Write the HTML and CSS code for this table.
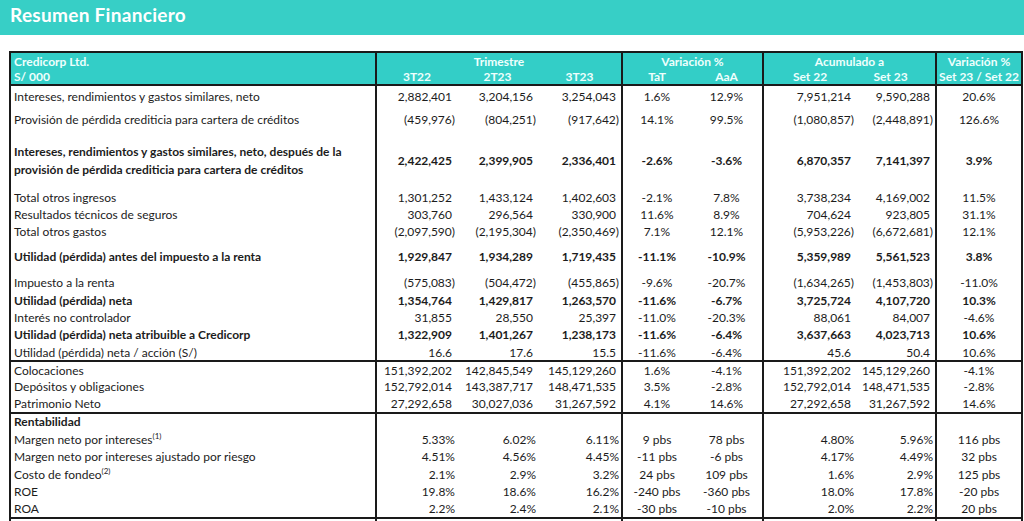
FILE: index.html
```html
<!DOCTYPE html>
<html lang="es">
<head>
    <meta charset="UTF-8">
    <meta name="viewport" content="width=device-width, initial-scale=1.0">
    <title>Resumen Financiero</title>
    <link rel="stylesheet" href="styles.css">
</head>
<body>
    <div class="banner">Resumen Financiero</div>

    <table class="summary">
        <colgroup>
            <col class="c-label">
            <col class="c-q1"><col class="c-q2"><col class="c-q3">
            <col class="c-tat"><col class="c-aaa">
            <col class="c-s22"><col class="c-s23">
            <col class="c-var">
        </colgroup>
        <thead>
            <tr class="h1">
                <th class="lbl">Credicorp Ltd.</th>
                <th colspan="3" class="grp">Trimestre</th>
                <th colspan="2" class="grp">Variación %</th>
                <th colspan="2" class="grp">Acumulado a</th>
                <th class="grp">Variación %</th>
            </tr>
            <tr class="h2">
                <th class="lbl">S/ 000</th>
                <th class="grp">3T22</th>
                <th>2T23</th>
                <th>3T23</th>
                <th class="grp">TaT</th>
                <th>AaA</th>
                <th class="grp">Set 22</th>
                <th class="s23">Set 23</th>
                <th class="grp">Set 23 / Set 22</th>
            </tr>
        </thead>

        <tbody>
            <tr class="r20">
                <td class="lbl">Intereses, rendimientos y gastos similares, neto</td>
                <td class="n grp">2,882,401</td><td class="n">3,204,156</td><td class="n">3,254,043</td>
                <td class="p grp">1.6%</td><td class="p">12.9%</td>
                <td class="n grp">7,951,214</td><td class="n">9,590,288</td>
                <td class="p grp">20.6%</td>
            </tr>
            <tr class="r26">
                <td class="lbl">Provisión de pérdida crediticia para cartera de créditos</td>
                <td class="n neg grp">(459,976)</td><td class="n neg">(804,251)</td><td class="n neg">(917,642)</td>
                <td class="p grp">14.1%</td><td class="p">99.5%</td>
                <td class="n neg grp">(1,080,857)</td><td class="n neg">(2,448,891)</td>
                <td class="p grp">126.6%</td>
            </tr>
            <tr class="r57 b">
                <td class="lbl two">Intereses, rendimientos y gastos similares, neto, después de la<br>provisión de pérdida crediticia para cartera de créditos</td>
                <td class="n grp">2,422,425</td><td class="n">2,399,905</td><td class="n">2,336,401</td>
                <td class="p grp">-2.6%</td><td class="p">-3.6%</td>
                <td class="n grp">6,870,357</td><td class="n">7,141,397</td>
                <td class="p grp">3.9%</td>
            </tr>
            <tr class="r17">
                <td class="lbl">Total otros ingresos</td>
                <td class="n grp">1,301,252</td><td class="n">1,433,124</td><td class="n">1,402,603</td>
                <td class="p grp">-2.1%</td><td class="p">7.8%</td>
                <td class="n grp">3,738,234</td><td class="n">4,169,002</td>
                <td class="p grp">11.5%</td>
            </tr>
            <tr class="r17">
                <td class="lbl">Resultados técnicos de seguros</td>
                <td class="n grp">303,760</td><td class="n">296,564</td><td class="n">330,900</td>
                <td class="p grp">11.6%</td><td class="p">8.9%</td>
                <td class="n grp">704,624</td><td class="n">923,805</td>
                <td class="p grp">31.1%</td>
            </tr>
            <tr class="r17">
                <td class="lbl">Total otros gastos</td>
                <td class="n neg grp">(2,097,590)</td><td class="n neg">(2,195,304)</td><td class="n neg">(2,350,469)</td>
                <td class="p grp">7.1%</td><td class="p">12.1%</td>
                <td class="n neg grp">(5,953,226)</td><td class="n neg">(6,672,681)</td>
                <td class="p grp">12.1%</td>
            </tr>
            <tr class="r32 b">
                <td class="lbl">Utilidad (pérdida) antes del impuesto a la renta</td>
                <td class="n grp">1,929,847</td><td class="n">1,934,289</td><td class="n">1,719,435</td>
                <td class="p grp">-11.1%</td><td class="p">-10.9%</td>
                <td class="n grp">5,359,989</td><td class="n">5,561,523</td>
                <td class="p grp">3.8%</td>
            </tr>
            <tr class="r20">
                <td class="lbl">Impuesto a la renta</td>
                <td class="n neg grp">(575,083)</td><td class="n neg">(504,472)</td><td class="n neg">(455,865)</td>
                <td class="p grp">-9.6%</td><td class="p">-20.7%</td>
                <td class="n neg grp">(1,634,265)</td><td class="n neg">(1,453,803)</td>
                <td class="p grp">-11.0%</td>
            </tr>
            <tr class="r17 b">
                <td class="lbl">Utilidad (pérdida) neta</td>
                <td class="n grp">1,354,764</td><td class="n">1,429,817</td><td class="n">1,263,570</td>
                <td class="p grp">-11.6%</td><td class="p">-6.7%</td>
                <td class="n grp">3,725,724</td><td class="n">4,107,720</td>
                <td class="p grp">10.3%</td>
            </tr>
            <tr class="r17">
                <td class="lbl">Interés no controlador</td>
                <td class="n grp">31,855</td><td class="n">28,550</td><td class="n">25,397</td>
                <td class="p grp">-11.0%</td><td class="p">-20.3%</td>
                <td class="n grp">88,061</td><td class="n">84,007</td>
                <td class="p grp">-4.6%</td>
            </tr>
            <tr class="r17 b">
                <td class="lbl">Utilidad (pérdida) neta atribuible a Credicorp</td>
                <td class="n grp">1,322,909</td><td class="n">1,401,267</td><td class="n">1,238,173</td>
                <td class="p grp">-11.6%</td><td class="p">-6.4%</td>
                <td class="n grp">3,637,663</td><td class="n">4,023,713</td>
                <td class="p grp">10.6%</td>
            </tr>
            <tr class="r14">
                <td class="lbl">Utilidad (pérdida) neta / acción (S/)</td>
                <td class="n grp">16.6</td><td class="n">17.6</td><td class="n">15.5</td>
                <td class="p grp">-11.6%</td><td class="p">-6.4%</td>
                <td class="n grp">45.6</td><td class="n">50.4</td>
                <td class="p grp">10.6%</td>
            </tr>
        </tbody>

        <tbody class="sec">
            <tr class="r16">
                <td class="lbl">Colocaciones</td>
                <td class="n grp">151,392,202</td><td class="n">142,845,549</td><td class="n">145,129,260</td>
                <td class="p grp">1.6%</td><td class="p">-4.1%</td>
                <td class="n grp">151,392,202</td><td class="n">145,129,260</td>
                <td class="p grp">-4.1%</td>
            </tr>
            <tr class="r17">
                <td class="lbl">Depósitos y obligaciones</td>
                <td class="n grp">152,792,014</td><td class="n">143,387,717</td><td class="n">148,471,535</td>
                <td class="p grp">3.5%</td><td class="p">-2.8%</td>
                <td class="n grp">152,792,014</td><td class="n">148,471,535</td>
                <td class="p grp">-2.8%</td>
            </tr>
            <tr class="r17">
                <td class="lbl">Patrimonio Neto</td>
                <td class="n grp">27,292,658</td><td class="n">30,027,036</td><td class="n">31,267,592</td>
                <td class="p grp">4.1%</td><td class="p">14.6%</td>
                <td class="n grp">27,292,658</td><td class="n">31,267,592</td>
                <td class="p grp">14.6%</td>
            </tr>
        </tbody>

        <tbody class="sec ratios">
            <tr class="r16t b">
                <td class="lbl">Rentabilidad</td>
                <td class="grp"></td><td></td><td></td>
                <td class="grp"></td><td></td>
                <td class="grp"></td><td></td>
                <td class="grp"></td>
            </tr>
            <tr class="r17">
                <td class="lbl">Margen neto por intereses<sup>(1)</sup></td>
                <td class="n grp">5.33%</td><td class="n">6.02%</td><td class="n">6.11%</td>
                <td class="p grp">9 pbs</td><td class="p">78 pbs</td>
                <td class="n grp">4.80%</td><td class="n">5.96%</td>
                <td class="p grp">116 pbs</td>
            </tr>
            <tr class="r17">
                <td class="lbl">Margen neto por intereses ajustado por riesgo</td>
                <td class="n grp">4.51%</td><td class="n">4.56%</td><td class="n">4.45%</td>
                <td class="p grp">-11 pbs</td><td class="p">-6 pbs</td>
                <td class="n grp">4.17%</td><td class="n">4.49%</td>
                <td class="p grp">32 pbs</td>
            </tr>
            <tr class="r18">
                <td class="lbl">Costo de fondeo<sup>(2)</sup></td>
                <td class="n grp">2.1%</td><td class="n">2.9%</td><td class="n">3.2%</td>
                <td class="p grp">24 pbs</td><td class="p">109 pbs</td>
                <td class="n grp">1.6%</td><td class="n">2.9%</td>
                <td class="p grp">125 pbs</td>
            </tr>
            <tr class="r17">
                <td class="lbl">ROE</td>
                <td class="n grp">19.8%</td><td class="n">18.6%</td><td class="n">16.2%</td>
                <td class="p grp">-240 pbs</td><td class="p">-360 pbs</td>
                <td class="n grp">18.0%</td><td class="n">17.8%</td>
                <td class="p grp">-20 pbs</td>
            </tr>
            <tr class="r17">
                <td class="lbl">ROA</td>
                <td class="n grp">2.2%</td><td class="n">2.4%</td><td class="n">2.1%</td>
                <td class="p grp">-30 pbs</td><td class="p">-10 pbs</td>
                <td class="n grp">2.0%</td><td class="n">2.2%</td>
                <td class="p grp">20 pbs</td>
            </tr>
        </tbody>

        <tbody class="sec">
            <tr class="r18 b">
                <td class="lbl">Calidad de cartera</td>
                <td class="grp"></td><td></td><td></td>
                <td class="grp"></td><td></td>
                <td class="grp"></td><td></td>
                <td class="grp"></td>
            </tr>
        </tbody>
    </table>
</body>
</html>
```

FILE: styles.css
```css
body {
    margin: 0;
    background-color: #fff;
    color: #1c1c1c;
    font-family: Lato, "Open Sans", sans-serif;
    overflow: hidden;
}

.banner {
    height: 35px;
    line-height: 29px;
    padding-left: 10px;
    background-color: #37cfc6;
    color: #fff;
    font-size: 19px;
    font-weight: 700;
    letter-spacing: 0.3px;
    margin-bottom: 16px;
}

.summary {
    margin-left: 9px;
    width: 1012px;
    table-layout: fixed;
    border-collapse: collapse;
    border: 2px solid #1a1a1a;
    font-size: 12px;
}

.c-label { width: 366px; }
.c-q1 { width: 81px; }
.c-q2 { width: 81px; }
.c-q3 { width: 84px; }
.c-tat { width: 69px; }
.c-aaa { width: 72px; }
.c-s22 { width: 93px; }
.c-s23 { width: 80px; }
.c-var { width: 86px; }

.summary th,
.summary td {
    padding: 0;
    white-space: nowrap;
    vertical-align: middle;
    line-height: 15px;
}

.summary .grp {
    border-left: 2px solid #1a1a1a;
}

/* encabezado */
.summary thead {
    background-color: #33cec7;
    color: #effffd;
    border-bottom: 2px solid #1a1a1a;
}

.summary thead th {
    font-weight: 700;
    text-align: center;
}

.summary .h1 th { height: 16px; }
.summary .h2 th { height: 15px; }
.summary thead .lbl { text-align: left; }
.summary .s23 { padding-right: 10px; }

/* celdas */
.summary .lbl {
    padding-left: 3px;
    text-align: left;
}

.summary .two { line-height: 18px; }

.summary .n {
    text-align: right;
    padding-right: 5px;
}

.summary .n.neg { padding-right: 2px; }

.summary .ratios .n { padding-right: 2px; }

.summary .p { text-align: center; }

.summary .b td { font-weight: 700; }

.summary sup {
    position: relative;
    top: -5px;
    font-size: 8px;
    line-height: 0;
    vertical-align: baseline;
}

.summary .sec { border-top: 2px solid #1a1a1a; }

.r14 td { height: 12px; padding-top: 2px; }
.r16 td { height: 16px; }
.r16t td { height: 14px; padding-bottom: 2px; }
.r17 td { height: 17px; }
.r18 td { height: 18px; }
.r19 td { height: 19px; }
.r20 td { height: 20px; }
.r26 td { height: 26px; }
.r32 td { height: 32px; }
.r57 td { height: 57px; }
```
